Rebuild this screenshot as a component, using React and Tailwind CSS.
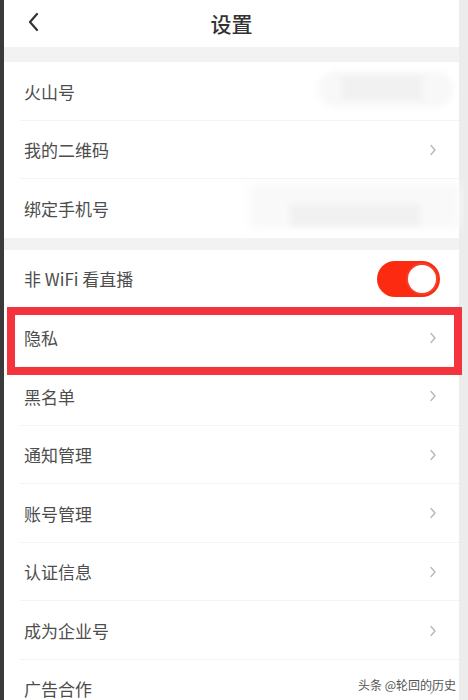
import React from "react";

const Chevron = () => (
  <svg width="8" height="12" viewBox="0 0 8 12" className="shrink-0">
    <path d="M2 1.5 L6 6 L2 10.5" fill="none" stroke="#b8b8b8" strokeWidth="1.4" strokeLinecap="round" strokeLinejoin="round" />
  </svg>
);

const Row = ({ label, chevron = true, divider = true, children }) => (
  <div className="relative flex h-[58.6px] shrink-0 items-center justify-between pl-[20px] pr-[22px]">
    <span className="text-[17px] text-[#4d4d4d]">{label}</span>
    {children}
    {!children && chevron && <Chevron />}
    {divider && <div className="absolute bottom-0 left-[16px] right-0 h-px bg-[#f3f3f3]" />}
  </div>
);

export default function App() {
  return (
    <div
      className="relative flex h-[700px] w-[468px] overflow-hidden bg-[#ececec]"
      style={{ fontFamily: '"Noto Sans CJK SC", "Noto Sans", sans-serif' }}
    >
      <div className="w-[4px] shrink-0 bg-[#3a3a3a]" />
      <div className="flex w-[455px] shrink-0 flex-col bg-[#f2f2f2]">
        <div className="relative flex h-[47px] shrink-0 items-center justify-center bg-white">
          <svg width="14" height="20" viewBox="0 0 14 20" className="absolute left-[23px] top-[12px]">
            <path d="M10 2 L3 10 L10 18" fill="none" stroke="#333" strokeWidth="2.2" strokeLinecap="round" strokeLinejoin="round" />
          </svg>
          <span className="text-[21px] font-medium text-[#333]">设置</span>
        </div>
        <div className="mt-[15px] flex shrink-0 flex-col bg-white">
          <Row label="火山号" chevron={false} />
          <Row label="我的二维码" />
          <Row label="绑定手机号" chevron={false} divider={false} />
        </div>
        <div className="mt-[12px] flex shrink-0 flex-col bg-white">
          <Row label="非 WiFi 看直播">
            <div className="mr-[-3px] flex h-[36px] w-[63px] items-center justify-end rounded-full bg-[#fb2a10] pr-[2px]">
              <div className="h-[32px] w-[32px] rounded-full border-2 border-[#f5412b] bg-white" />
            </div>
          </Row>
          <Row label="隐私" />
          <Row label="黑名单" />
          <Row label="通知管理" />
          <Row label="账号管理" />
          <Row label="认证信息" />
          <Row label="成为企业号" />
          <Row label="广告合作" divider={false} />
        </div>
      </div>

      {/* blurred redactions */}
      <div className="absolute left-[318px] top-[71px] h-[36px] w-[136px] rounded-full bg-[#f8f8f8] blur-[3px]" />
      <div className="absolute left-[342px] top-[76px] h-[24px] w-[80px] bg-[#f1f1f1] blur-[2px]" />
      <div className="absolute left-[250px] top-[184px] h-[44px] w-[210px] bg-[#f9f9f9] blur-[4px]" />
      <div className="absolute left-[290px] top-[204px] h-[22px] w-[130px] bg-[#f1f1f1] blur-[2px]" />

      {/* highlight box */}
      <div className="absolute left-[7px] top-[307px] h-[68px] w-[455px] border-[8px] border-[#f3343c]" />

      {/* watermark */}
      <div className="absolute left-[358px] top-[676px] whitespace-nowrap text-[12px] text-[#555] [text-shadow:0_0_2px_#fff,0_0_2px_#fff]">
        头条 @轮回的历史
      </div>
    </div>
  );
}
